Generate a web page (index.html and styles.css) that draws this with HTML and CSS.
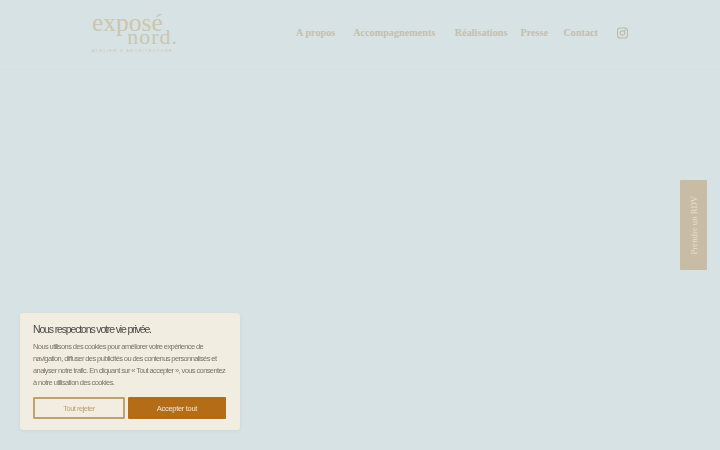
FILE: index.html
```html
<!DOCTYPE html>
<html lang="fr">
<head>
    <meta charset="UTF-8">
    <meta name="viewport" content="width=device-width, initial-scale=1.0">
    <title>Exposé Nord</title>
    <link rel="stylesheet" href="styles.css">
</head>
<body>
    <header class="site-header">
        <a class="logo" href="#">
            <span class="logo-top">exposé</span>
            <span class="logo-bottom">nord.</span>
            <span class="logo-sub">ATELIER D'ARCHITECTURE</span>
        </a>
        <nav class="main-nav">
            <a class="nav-propos" href="#">A propos</a>
            <a class="nav-accomp" href="#">Accompagnements</a>
            <a class="nav-real" href="#">Réalisations</a>
            <a class="nav-presse" href="#">Presse</a>
            <a class="nav-contact" href="#">Contact</a>
            <a class="nav-insta" href="#" aria-label="Instagram">
                <svg width="11" height="12" viewBox="0 0 12 12" fill="none" stroke="#bdb8a5" stroke-width="1.1">
                    <rect x="0.6" y="0.6" width="10.8" height="10.8" rx="2.8"></rect>
                    <circle cx="6" cy="6" r="2.5"></circle>
                    <circle cx="9" cy="3" r="0.4"></circle>
                </svg>
            </a>
        </nav>
    </header>

    <a class="rdv-tab" href="#"><span>Prendre un RDV</span></a>

    <div class="cookie-box">
        <h2>Nous respectons votre vie privée.</h2>
        <p>Nous utilisons des cookies pour améliorer votre expérience de<br>navigation, diffuser des publicités ou des contenus personnalisés et<br>analyser notre trafic. En cliquant sur « Tout accepter », vous consentez<br>à notre utilisation des cookies.</p>
        <div class="cookie-buttons">
            <button class="btn-reject">Tout rejeter</button>
            <button class="btn-accept">Accepter tout</button>
        </div>
    </div>
</body>
</html>
```

FILE: styles.css
```css
html, body {
    height: 100%;
}
body {
    margin: 0;
    background-color: #d6e2e3;
    font-family: "Liberation Sans", Arial, sans-serif;
    overflow: hidden;
}
a {
    text-decoration: none;
    color: inherit;
}
.site-header {
    height: 67px;
    box-sizing: border-box;
    padding: 0 92px;
    display: flex;
    align-items: flex-start;
    justify-content: space-between;
    border-bottom: 1px solid #d9e4e4;
}
.logo {
    width: 86px;
    margin-top: 11px;
    display: flex;
    flex-direction: column;
    font-family: "Liberation Serif", serif;
    color: #ccc6ae;
}
.logo-top {
    font-size: 25.5px;
    line-height: 24px;
}
.logo-bottom {
    margin-top: -3.8px;
    font-size: 22px;
    line-height: 12px;
    letter-spacing: 1px;
    text-align: right;
}
.logo-sub {
    margin-top: 4.8px;
    font-family: "Liberation Sans", sans-serif;
    font-size: 4px;
    line-height: 5px;
    letter-spacing: 1.3px;
    white-space: nowrap;
}
.main-nav {
    display: flex;
    align-items: center;
    height: 65px;
    font-family: "Liberation Serif", serif;
    font-size: 10.2px;
    font-weight: bold;
    color: #c4bfad;
}
.nav-accomp {
    margin-left: 18px;
}
.nav-real {
    margin-left: 19.5px;
}
.nav-presse {
    margin-left: 13px;
}
.nav-contact {
    margin-left: 15.5px;
}
.nav-insta {
    margin-left: 19px;
    display: flex;
}
.rdv-tab {
    position: fixed;
    left: 680px;
    top: 180px;
    width: 27px;
    height: 90px;
    background-color: #c8bda4;
    display: flex;
    align-items: center;
    justify-content: center;
    border-radius: 1px;
}
.rdv-tab span {
    writing-mode: vertical-rl;
    transform: rotate(180deg);
    font-family: "Liberation Serif", serif;
    font-size: 8.7px;
    color: #e6dfcd;
}
.cookie-box {
    position: fixed;
    left: 20px;
    top: 313px;
    width: 220px;
    height: 117px;
    box-sizing: border-box;
    padding: 10px 13px;
    background-color: #f2ede1;
    border-radius: 3px;
    box-shadow: 0 1px 4px rgba(0, 0, 0, 0.05);
}
.cookie-box h2 {
    margin: 0;
    font-family: "Liberation Sans", sans-serif;
    font-size: 10.5px;
    line-height: 13px;
    font-weight: normal;
    letter-spacing: -1.15px;
    color: #4a4a45;
}
.cookie-box p {
    margin: 5px 0 0;
    font-size: 7.5px;
    line-height: 12px;
    letter-spacing: -0.6px;
    white-space: nowrap;
    color: #77756c;
}
.cookie-buttons {
    margin-top: 8px;
    display: flex;
    gap: 3px;
}
.cookie-buttons button {
    height: 22px;
    padding: 0;
    font-family: "Liberation Sans", sans-serif;
    font-size: 7.5px;
    letter-spacing: -0.3px;
    border-radius: 1px;
}
.btn-reject {
    width: 92px;
    background-color: transparent;
    border: 2px solid #bfa273;
    color: #bf9f70;
}
.cookie-buttons .btn-reject {
    letter-spacing: -0.5px;
}
.btn-accept {
    width: 98px;
    background-color: #b56c17;
    border: none;
    color: #f2e6d2;
}
```
